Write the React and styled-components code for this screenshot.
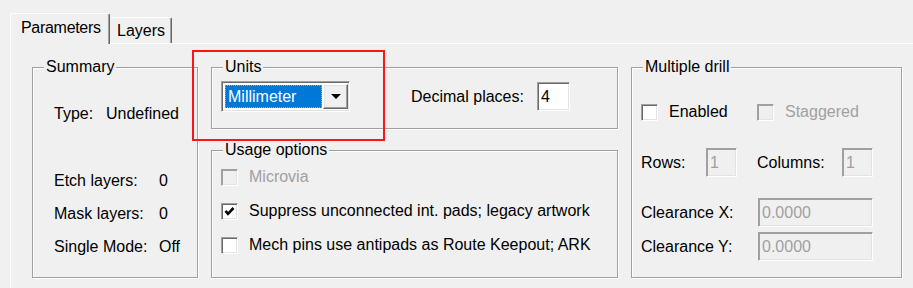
import React from "react";
import styled, { createGlobalStyle } from "styled-components";

const GlobalStyle = createGlobalStyle`
  html, body {
    margin: 0;
    padding: 0;
    background: #f0f0f0;
  }
  body {
    font-family: "Liberation Sans", Arial, sans-serif;
    font-size: 16px;
    color: #000;
  }
`;

const Page = styled.div`
  position: relative;
  width: 913px;
  height: 288px;
  overflow: hidden;
  box-sizing: border-box;
  padding: 13px 0 0 10px;
  background: #f0f0f0;
`;

const TabStrip = styled.div`
  display: flex;
  align-items: flex-end;
  height: 30px;
`;

const Tab = styled.div`
  position: relative;
  z-index: 1;
  box-sizing: border-box;
  display: flex;
  align-items: center;
  width: ${(p) => p.$w}px;
  height: ${(p) => (p.$active ? 31 : 26)}px;
  margin-bottom: ${(p) => (p.$active ? -1 : 0)}px;
  padding: ${(p) => (p.$active ? "0 0 2px 10px" : "0 0 0 6px")};
  background: #f0f0f0;
  border-top: 1px solid #fff;
  border-left: 1px solid ${(p) => (p.$active ? "#fff" : "transparent")};
  border-right: 1px solid #696969;
  box-shadow: inset -1px 0 0 #a0a0a0;
  border-radius: 2px 2px 0 0;
  letter-spacing: ${(p) => (p.$active ? "-0.3px" : "0")};
`;

const Panel = styled.div`
  box-sizing: border-box;
  width: 920px;
  height: 260px;
  border-top: 1px solid #fff;
  border-left: 1px solid #fff;
  padding: 23px 0 0 21px;
  display: flex;
  gap: 13px;
`;

const Column = styled.div`
  display: flex;
  flex-direction: column;
  gap: 21px;
`;

const Group = styled.div`
  position: relative;
  box-sizing: border-box;
  width: ${(p) => p.$w}px;
  height: ${(p) => p.$h}px;
  padding: ${(p) => p.$pad};
  border: 1px solid #a0a0a0;
  box-shadow: inset 1px 1px 0 #fff, 1px 1px 0 #fff;
`;

const Caption = styled.span`
  position: absolute;
  top: -10px;
  left: 11px;
  padding: 0 2px;
  line-height: 18px;
  background: #f0f0f0;
`;

const SummaryGrid = styled.div`
  display: grid;
  grid-template-columns: 105px auto;
  row-gap: 13px;
  line-height: 20px;
`;

const TypeRow = styled.div`
  display: flex;
  line-height: 20px;
  margin-bottom: 47px;
`;

const TypeLabel = styled.span`
  width: 52px;
`;

const UnitsRow = styled.div`
  display: flex;
  align-items: center;
`;

const Combo = styled.div`
  box-sizing: border-box;
  display: flex;
  width: 129px;
  height: 31px;
  padding: 3px 1px 1px 3px;
  gap: 1px;
  background: #fff;
  border: 1px solid;
  border-color: #a0a0a0 #fff #fff #a0a0a0;
  box-shadow: inset 1px 1px 0 #696969, inset -1px -1px 0 #e3e3e3;
`;

const ComboValue = styled.div`
  flex: 1;
  box-sizing: border-box;
  display: flex;
  align-items: center;
  padding-left: 2px;
  background: #0078d7;
  color: #fff;
  border: 1px dotted #e8a04a;
  height: 23px;
`;

const ComboButton = styled.div`
  box-sizing: border-box;
  display: flex;
  align-items: center;
  justify-content: center;
  width: 25px;
  height: 25px;
  margin-top: -1px;
  background: #f0f0f0;
  border: 1px solid;
  border-color: #fff #696969 #696969 #fff;
  box-shadow: inset -1px -1px 0 #a0a0a0, inset 1px 1px 0 #e3e3e3;

  &::after {
    content: "";
    border-left: 5px solid transparent;
    border-right: 5px solid transparent;
    border-top: 5px solid #000;
  }
`;

const Label = styled.span`
  display: inline-block;
  width: ${(p) => (p.$w ? `${p.$w}px` : "auto")};
  margin-left: ${(p) => p.$ml || 0}px;
  color: ${(p) => (p.$disabled ? "#a0a0a0" : "#000")};
  white-space: nowrap;
`;

const Field = styled.div`
  box-sizing: border-box;
  display: flex;
  align-items: center;
  width: ${(p) => p.$w}px;
  height: 29px;
  padding-left: 3px;
  background: ${(p) => (p.$disabled ? "#f0f0f0" : "#fff")};
  color: ${(p) => (p.$disabled ? "#a0a0a0" : "#000")};
  border: 1px solid;
  border-color: #a0a0a0 #fff #fff #a0a0a0;
  box-shadow: inset 1px 1px 0 ${(p) => (p.$disabled ? "#a0a0a0" : "#696969")},
    inset -1px -1px 0 #e3e3e3;
`;

const CheckList = styled.div`
  display: flex;
  flex-direction: column;
  gap: 16px;
`;

const CheckItem = styled.div`
  display: flex;
  align-items: center;
  gap: 11px;
  height: 18px;
  width: ${(p) => (p.$w ? `${p.$w}px` : "auto")};
  color: ${(p) => (p.$disabled ? "#a0a0a0" : "#000")};
  white-space: nowrap;
`;

const Box = styled.span`
  box-sizing: border-box;
  display: flex;
  align-items: center;
  justify-content: center;
  flex: none;
  width: 17px;
  height: 17px;
  background: ${(p) => (p.$disabled ? "#f0f0f0" : "#fff")};
  border: 1px solid;
  border-color: #a0a0a0 #fff #fff #a0a0a0;
  box-shadow: inset 1px 1px 0 ${(p) => (p.$disabled ? "#a0a0a0" : "#696969")},
    inset -1px -1px 0 #e3e3e3;
`;

const DrillRow = styled.div`
  display: flex;
  align-items: center;
  margin-top: ${(p) => p.$mt || 0}px;
`;

const Annotation = styled.div`
  position: absolute;
  left: 192px;
  top: 50px;
  width: 193px;
  height: 91px;
  box-sizing: border-box;
  border: 2px solid #ff1414;
  pointer-events: none;
`;

function Check({ checked, disabled, label, w }) {
  return (
    <CheckItem $disabled={disabled} $w={w}>
      <Box $disabled={disabled}>
        {checked && (
          <svg width="11" height="11" viewBox="0 0 11 11">
            <path d="M1.5 4.8 L4 7.8 L9.5 2" fill="none" stroke="#000" strokeWidth="2.6" />
          </svg>
        )}
      </Box>
      {label}
    </CheckItem>
  );
}

export default function App() {
  return (
    <Page>
      <GlobalStyle />
      <TabStrip>
        <Tab $active $w={100}>Parameters</Tab>
        <Tab $w={62}>Layers</Tab>
      </TabStrip>
      <Panel>
        <Group $w={166} $h={211} $pad="36px 0 0 21px">
          <Caption>Summary</Caption>
          <TypeRow>
            <TypeLabel>Type:</TypeLabel>
            <span>Undefined</span>
          </TypeRow>
          <SummaryGrid>
            <span>Etch layers:</span>
            <span>0</span>
            <span>Mask layers:</span>
            <span>0</span>
            <span>Single Mode:</span>
            <span>Off</span>
          </SummaryGrid>
        </Group>

        <Column>
          <Group $w={407} $h={62} $pad="13px 0 0 9px">
            <Caption>Units</Caption>
            <UnitsRow>
              <Combo>
                <ComboValue>Millimeter</ComboValue>
                <ComboButton />
              </Combo>
              <Label $ml={61} $w={126}>Decimal places:</Label>
              <Field $w={33}>4</Field>
            </UnitsRow>
          </Group>
          <Group $w={407} $h={128} $pad="17px 0 0 9px">
            <Caption>Usage options</Caption>
            <CheckList>
              <Check disabled label="Microvia" />
              <Check checked label="Suppress unconnected int. pads; legacy artwork" />
              <Check label="Mech pins use antipads as Route Keepout; ARK" />
            </CheckList>
          </Group>
        </Column>

        <Group $w={271} $h={211} $pad="35px 0 0 9px">
          <Caption>Multiple drill</Caption>
          <DrillRow>
            <Check w={116} label="Enabled" />
            <Check disabled label="Staggered" />
          </DrillRow>
          <DrillRow $mt={27}>
            <Label $w={65}>Rows:</Label>
            <Field $w={31} $disabled>1</Field>
            <Label $ml={20} $w={85}>Columns:</Label>
            <Field $w={31} $disabled>1</Field>
          </DrillRow>
          <DrillRow $mt={21}>
            <Label $w={117}>Clearance X:</Label>
            <Field $w={115} $disabled>0.0000</Field>
          </DrillRow>
          <DrillRow $mt={5}>
            <Label $w={117}>Clearance Y:</Label>
            <Field $w={115} $disabled>0.0000</Field>
          </DrillRow>
        </Group>
      </Panel>
      <Annotation />
    </Page>
  );
}
